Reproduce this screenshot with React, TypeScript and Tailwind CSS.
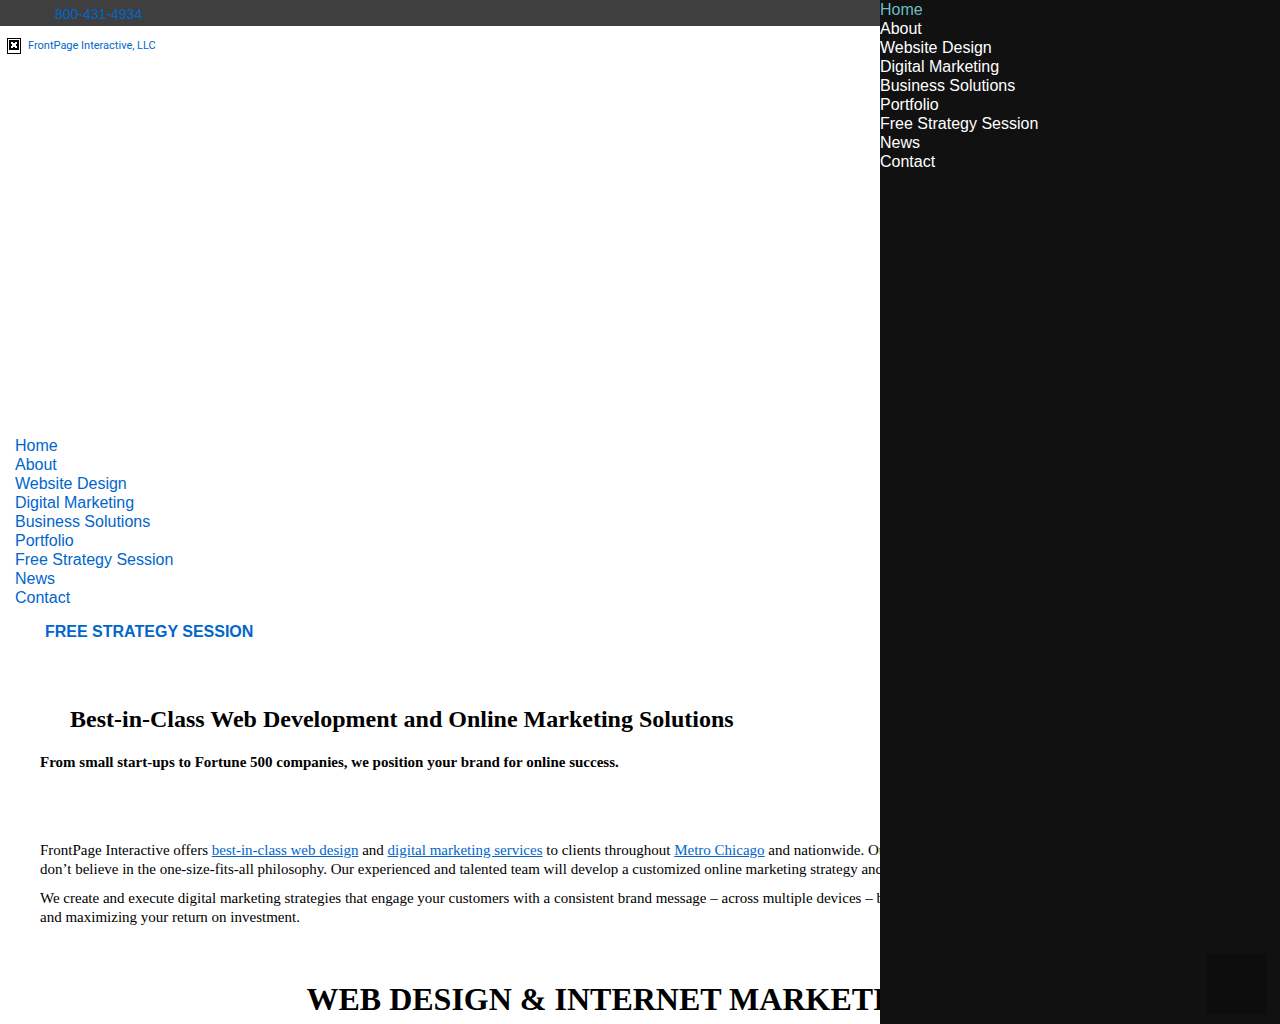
import React from 'react';

const links = [
  { label: 'Home', href: '#home' },
  { label: 'About', href: '#about' },
  { label: 'Website Design', href: '#website-design' },
  { label: 'Digital Marketing', href: '#digital-marketing' },
  { label: 'Business Solutions', href: '#business-solutions' },
  { label: 'Portfolio', href: '#portfolio' },
  { label: 'Free Strategy Session', href: '#free-strategy-session' },
  { label: 'News', href: '#news' },
  { label: 'Contact', href: '#contact' },
];

const TopBar: React.FC = () => (
  <div className="h-[26px] bg-[#3f3f3f] pl-[55px] pt-1 text-sm leading-5">
    <a href="tel:800-431-4934" className="text-[#0066cc]">800-431-4934</a>
  </div>
);

const Logo: React.FC = () => (
  <a href="#home" className="flex h-[402px] items-start gap-[7px] pl-[7px] pt-3 text-[#0066cc]">
    <svg className="h-4 w-[14px] shrink-0" viewBox="0 0 14 16" shapeRendering="crispEdges" aria-hidden="true">
      <rect width="14" height="16" fill="#000" />
      <rect x="1" y="1" width="12" height="14" fill="#fff" />
      <rect x="2" y="2" width="10" height="10" fill="#000" />
      <path
        d="M4 4h2v1h2v-1h2v2h-1v2h1v2h-2v-1h-2v1h-2v-2h1v-2h-1z"
        fill="#fff"
      />
    </svg>
    <span className="font-['Roboto',sans-serif] text-[11px] leading-4">FrontPage Interactive, LLC</span>
  </a>
);

const MainNav: React.FC = () => (
  <nav aria-label="Main" className="pl-[15px] pt-2">
    <ul className="text-base leading-[19px]">
      {links.map((link) => (
        <li key={link.href}>
          <a href={link.href} className="text-[#0066cc]">{link.label}</a>
        </li>
      ))}
    </ul>
  </nav>
);

const SlideMenu: React.FC = () => (
  <nav aria-label="Slide menu" className="fixed inset-y-0 right-0 w-[400px] bg-[#111111]">
    <ul className="text-base leading-[19px]">
      {links.map((link, index) => (
        <li key={link.href}>
          <a href={link.href} className={index === 0 ? 'text-[#6dbcc4]' : 'text-white'}>{link.label}</a>
        </li>
      ))}
    </ul>
    <button type="button" aria-label="Back to top" className="absolute bottom-[10px] right-[13px] size-[60px] bg-[#0d0d0d]" />
  </nav>
);

const Intro: React.FC = () => (
  <main className="px-10 font-['Liberation_Serif',serif] text-black">
    <h2 className="pl-[30px] pt-[61px] text-2xl leading-7 font-bold">
      Best-in-Class Web Development and Online Marketing Solutions
    </h2>
    <p className="pt-5 text-[15px] leading-[19px] font-bold">
      From small start-ups to Fortune 500 companies, we position your brand for online success.
    </p>
    <div className="space-y-[10px] pt-[69px] text-[15px] leading-[19px]">
      <p>
        FrontPage Interactive offers{' '}
        <a href="#website-design" className="text-[#0066cc] underline">best-in-class web design</a> and{' '}
        <a href="#digital-marketing" className="text-[#0066cc] underline">digital marketing services</a> to clients
        throughout <a href="#chicago" className="text-[#0066cc] underline">Metro Chicago</a> and nationwide. Our
        clients come to us from many different industries and we don’t believe in the one-size-fits-all philosophy. Our
        experienced and talented team will develop a customized online marketing strategy and engaging website for you.
      </p>
      <p>
        We create and execute digital marketing strategies that engage your customers with a consistent brand message –
        across multiple devices – building awareness, growing your qualified web traffic and&nbsp;maximizing your return
        on investment.
      </p>
    </div>
    <h1 className="pr-10 pt-[54px] text-center text-[32px] leading-[37px] font-bold">
      WEB DESIGN &amp; INTERNET MARKETING
    </h1>
  </main>
);

const App: React.FC = () => (
  <div className="min-h-screen bg-white font-['Liberation_Sans',Arial,sans-serif]">
    <TopBar />
    <header>
      <Logo />
      <MainNav />
      <a href="#free-strategy-session" className="ml-[45px] mt-[15px] inline-block text-base leading-[19px] font-bold text-[#0066cc]">
        FREE STRATEGY SESSION
      </a>
    </header>
    <Intro />
    <SlideMenu />
  </div>
);

export default App;
